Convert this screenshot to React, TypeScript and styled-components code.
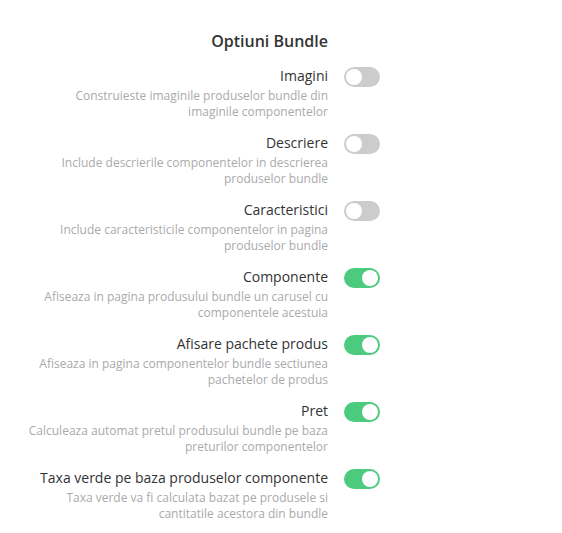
import { useState } from "react";
import styled, { createGlobalStyle } from "styled-components";

const GlobalStyle = createGlobalStyle`
  body {
    margin: 0;
    background: #ffffff;
    font-family: "Open Sans", "Liberation Sans", sans-serif;
  }
`;

const Panel = styled.div`
  width: 380px;
  padding: 29px 0 0 8px;
  box-sizing: content-box;
`;

const Title = styled.h2`
  margin: 0 60px 13px 0;
  font-size: 16px;
  line-height: 24px;
  font-weight: 600;
  color: #333333;
  text-align: right;
`;

const OptionRow = styled.div`
  display: grid;
  grid-template-columns: 320px 36px;
  column-gap: 16px;
  align-items: start;
  margin-bottom: 13px;
`;

const TextCol = styled.div`
  display: flex;
  flex-direction: column;
  align-items: flex-end;
  text-align: right;
`;

const Label = styled.div`
  font-size: 14px;
  line-height: 20px;
  color: #333333;
`;

const Description = styled.div`
  max-width: 300px;
  font-size: 12px;
  line-height: 16px;
  color: #aaaaaa;
  margin-top: 2px;
`;

const Track = styled.button<{ $on: boolean }>`
  position: relative;
  width: 36px;
  height: 20px;
  margin-top: 1px;
  padding: 0;
  border: none;
  border-radius: 10px;
  background: ${(p) => (p.$on ? "#4ccb7e" : "#cccccc")};
  cursor: pointer;
`;

const Knob = styled.span<{ $on: boolean }>`
  position: absolute;
  top: 2px;
  left: ${(p) => (p.$on ? "18px" : "2px")};
  width: 16px;
  height: 16px;
  border-radius: 50%;
  background: #ffffff;
`;

const options = [
  {
    label: "Imagini",
    desc: "Construieste imaginile produselor bundle din imaginile componentelor",
    on: false,
  },
  {
    label: "Descriere",
    desc: "Include descrierile componentelor in descrierea produselor bundle",
    on: false,
  },
  {
    label: "Caracteristici",
    desc: "Include caracteristicile componentelor in pagina produselor bundle",
    on: false,
  },
  {
    label: "Componente",
    desc: "Afiseaza in pagina produsului bundle un carusel cu componentele acestuia",
    on: true,
  },
  {
    label: "Afisare pachete produs",
    desc: "Afiseaza in pagina componentelor bundle sectiunea pachetelor de produs",
    on: true,
  },
  {
    label: "Pret",
    desc: "Calculeaza automat pretul produsului bundle pe baza preturilor componentelor",
    on: true,
  },
  {
    label: "Taxa verde pe baza produselor componente",
    desc: "Taxa verde va fi calculata bazat pe produsele si cantitatile acestora din bundle",
    on: true,
  },
];

function App() {
  const [state, setState] = useState(options.map((o) => o.on));
  return (
    <>
      <GlobalStyle />
      <Panel>
        <Title>Optiuni Bundle</Title>
        {options.map((o, i) => (
          <OptionRow key={o.label}>
            <TextCol>
              <Label>{o.label}</Label>
              <Description>{o.desc}</Description>
            </TextCol>
            <Track
              $on={state[i]}
              onClick={() => setState((s) => s.map((v, j) => (j === i ? !v : v)))}
            >
              <Knob $on={state[i]} />
            </Track>
          </OptionRow>
        ))}
      </Panel>
    </>
  );
}

export default App;
